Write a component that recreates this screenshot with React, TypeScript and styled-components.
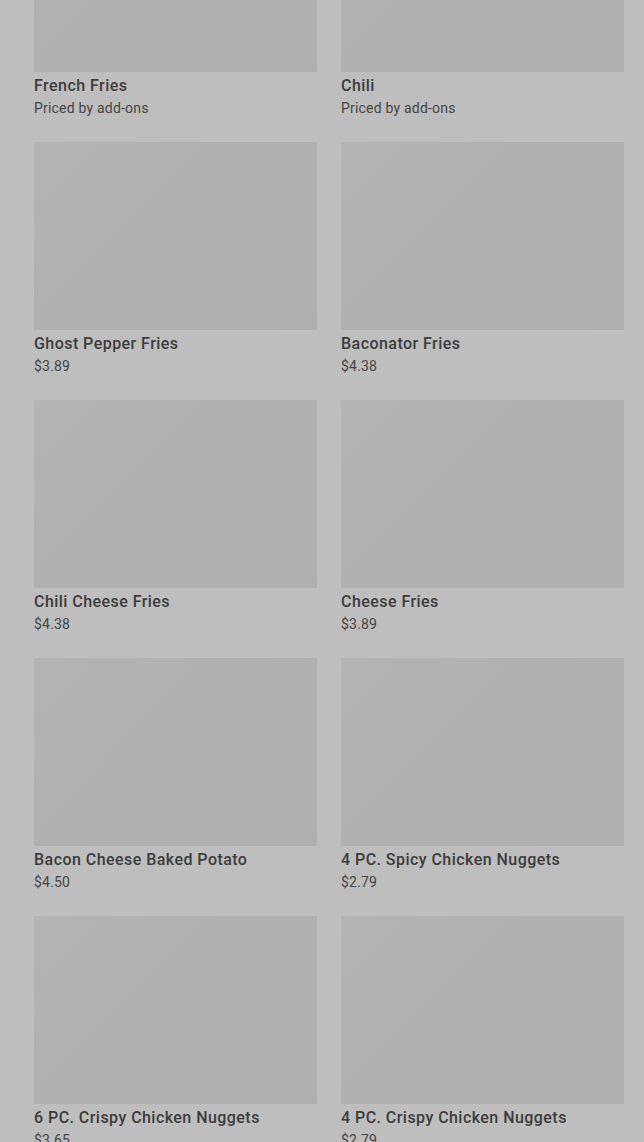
import React from "react";
import styled, { createGlobalStyle } from "styled-components";

const Global = createGlobalStyle`
  html, body { margin: 0; padding: 0; background: #bebebe; overflow: hidden; }
  body { font-family: Roboto, "Noto Sans", Arial, sans-serif; }
`;

const Page = styled.div`
  width: 644px;
  height: 1142px;
  overflow: hidden;
  background: #bebebe;
`;

const Grid = styled.div`
  display: grid;
  grid-template-columns: 283px 283px;
  column-gap: 24px;
  row-gap: 23px;
  padding-left: 34px;
  margin-top: -116px;
`;

const Card = styled.div`
  display: flex;
  flex-direction: column;
`;

const Thumb = styled.div`
  height: 188px;
  background: linear-gradient(135deg, #b4b4b4 0%, #b0b0b0 40%, #afafaf 100%);
`;

const Title = styled.div`
  margin-top: 3px;
  font-size: 16px;
  line-height: 22px;
  font-weight: 500;
  color: #3c3c3c;
  letter-spacing: 0.45px;
`;

const Price = styled.div`
  font-size: 14px;
  line-height: 22px;
  color: #454545;
  letter-spacing: 0.2px;
`;

const items: [string, string][] = [
  ["French Fries", "Priced by add-ons"],
  ["Chili", "Priced by add-ons"],
  ["Ghost Pepper Fries", "$3.89"],
  ["Baconator Fries", "$4.38"],
  ["Chili Cheese Fries", "$4.38"],
  ["Cheese Fries", "$3.89"],
  ["Bacon Cheese Baked Potato", "$4.50"],
  ["4 PC. Spicy Chicken Nuggets", "$2.79"],
  ["6 PC. Crispy Chicken Nuggets", "$3.65"],
  ["4 PC. Crispy Chicken Nuggets", "$2.79"],
];

export default function App() {
  return (
    <Page>
      <Global />
      <Grid>
        {items.map(([t, p]) => (
          <Card key={t}>
            <Thumb />
            <Title>{t}</Title>
            <Price>{p}</Price>
          </Card>
        ))}
      </Grid>
    </Page>
  );
}
